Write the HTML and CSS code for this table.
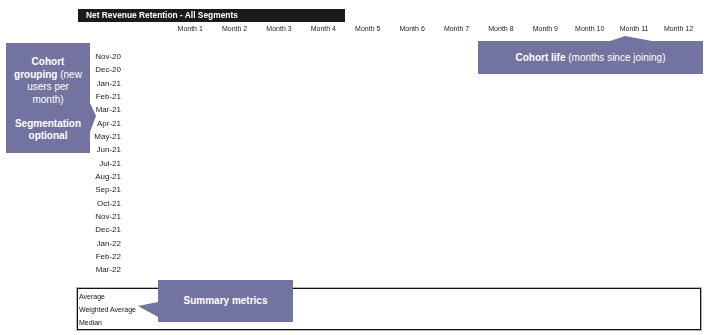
FILE: index.html
```html
<!DOCTYPE html>
<html>
<head>
<meta charset="utf-8">
<link rel="stylesheet" href="styles.css">
</head>
<body>
<div class="page">
  <div class="sheet">
    <div class="title">Net Revenue Retention - All Segments</div>
    <div class="header">
      <div class="corner"></div>
      <div class="mh">Month 1</div>
      <div class="mh">Month 2</div>
      <div class="mh">Month 3</div>
      <div class="mh">Month 4</div>
      <div class="mh">Month 5</div>
      <div class="mh">Month 6</div>
      <div class="mh">Month 7</div>
      <div class="mh">Month 8</div>
      <div class="mh">Month 9</div>
      <div class="mh">Month 10</div>
      <div class="mh">Month 11</div>
      <div class="mh">Month 12</div>
    </div>
    <div class="rows">
      <div class="rl">Nov-20</div>
      <div class="rl">Dec-20</div>
      <div class="rl">Jan-21</div>
      <div class="rl">Feb-21</div>
      <div class="rl">Mar-21</div>
      <div class="rl">Apr-21</div>
      <div class="rl">May-21</div>
      <div class="rl">Jun-21</div>
      <div class="rl">Jul-21</div>
      <div class="rl">Aug-21</div>
      <div class="rl">Sep-21</div>
      <div class="rl">Oct-21</div>
      <div class="rl">Nov-21</div>
      <div class="rl">Dec-21</div>
      <div class="rl">Jan-22</div>
      <div class="rl">Feb-22</div>
      <div class="rl">Mar-22</div>
    </div>
    <div class="summary">
      <div class="sr">Average</div>
      <div class="sr">Weighted Average</div>
      <div class="sr">Median</div>
    </div>
  </div>

  <div class="callout c-cohort">
    <p><b>Cohort</b><br><b>grouping</b> (new<br>users per<br>month)</p>
    <p class="p2"><b>Segmentation</b><br><b>optional</b></p>
  </div>
  <div class="callout c-life"><b>Cohort life</b> (months since joining)</div>
  <div class="callout c-summary"><b>Summary metrics</b></div>
</div>
</body>
</html>
```

FILE: styles.css
```css
html, body {
  margin: 0;
  padding: 0;
  background: #ffffff;
}

.page {
  position: relative;
  width: 720px;
  height: 335px;
  overflow: hidden;
  font-family: "Liberation Sans", Arial, sans-serif;
  color: #1a1a1a;
}

.sheet {
  padding: 9px 0 0 78px;
  will-change: transform;
  -webkit-font-smoothing: antialiased;
}

.title {
  box-sizing: border-box;
  width: 267px;
  height: 13px;
  padding-left: 8px;
  background: #1b1b1b;
  color: #ffffff;
  font-weight: bold;
  font-size: 8.4px;
  line-height: 13px;
  white-space: nowrap;
}

.header {
  display: grid;
  grid-template-columns: 90px repeat(12, 44.4px);
  height: 13.33px;
  font-size: 7px;
  line-height: 13.33px;
  color: #222222;
}

.mh {
  text-align: center;
  white-space: nowrap;
}

.rows {
  display: flex;
  flex-direction: column;
  width: 46px;
  margin-top: 14.67px;
}

.rl {
  box-sizing: border-box;
  height: 13.333px;
  line-height: 13.333px;
  padding-right: 3px;
  text-align: right;
  font-size: 8px;
  color: #222222;
  white-space: nowrap;
}

.summary {
  box-sizing: border-box;
  width: 624px;
  margin: 11.33px 0 0 -1px;
  padding: 1.5px 0 0 1px;
  border: 1px solid #111111;
  box-shadow: 0 0 0 1px #b5b5b5;
}

.sr {
  height: 13px;
  line-height: 13px;
  font-size: 7px;
  color: #111111;
  white-space: nowrap;
}

.callout {
  position: absolute;
  box-sizing: border-box;
  background: #7373a0;
  color: #ffffff;
  font-size: 10px;
  text-align: center;
  white-space: nowrap;
}

.callout p {
  margin: 0;
}

.c-cohort {
  left: 6px;
  top: 43px;
  width: 84px;
  height: 110px;
  padding-top: 13px;
  line-height: 12.5px;
}

.c-cohort .p2 {
  margin-top: 11.7px;
}

.c-cohort::after {
  content: "";
  position: absolute;
  left: 100%;
  top: 60px;
  width: 6px;
  height: 29px;
  background: #7373a0;
  clip-path: polygon(0 0, 100% 45%, 0 100%);
}

.c-life {
  left: 478px;
  top: 41px;
  width: 225px;
  height: 33px;
  line-height: 33px;
}

.c-life::before {
  content: "";
  position: absolute;
  left: 132px;
  top: -5px;
  width: 42px;
  height: 5px;
  background: #7373a0;
  clip-path: polygon(0 100%, 36% 0, 100% 100%);
}

.c-summary {
  left: 158px;
  top: 280px;
  width: 135px;
  height: 42px;
  line-height: 42px;
}

.c-summary::before {
  content: "";
  position: absolute;
  right: 100%;
  top: 22px;
  width: 20px;
  height: 15px;
  background: #7373a0;
  clip-path: polygon(100% 0, 0 27%, 100% 100%);
}
```
